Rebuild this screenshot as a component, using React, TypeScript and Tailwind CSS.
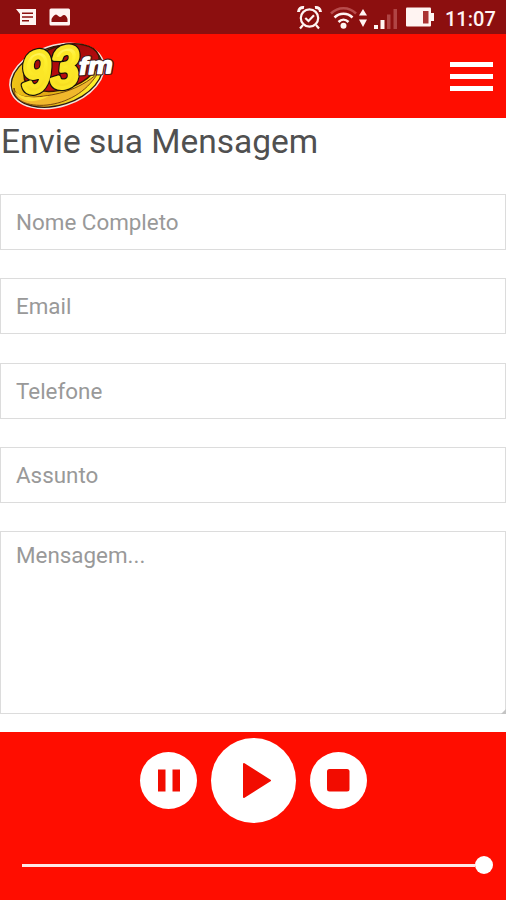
import { useState } from "react";

const FIELDS = [
  { name: "nome", label: "Nome Completo", type: "text" },
  { name: "email", label: "Email", type: "email" },
  { name: "telefone", label: "Telefone", type: "tel" },
  { name: "assunto", label: "Assunto", type: "text" },
];

const INPUT_CLASS =
  "block w-full rounded-none border border-[#dcdcdc] bg-white px-[15px] text-[22.4px] text-[#444] outline-none placeholder:text-[#999]";

function StatusBar() {
  return (
    <div className="flex h-[34px] items-center justify-between bg-[#8c0f0f] pr-[11px] pl-4 text-[#fff4f2]">
      <div className="flex items-center gap-[13px]">
        <svg width="20" height="18" viewBox="0 0 20 18">
          <path d="M0 1h20v16H4V6z" fill="#fff4f2" />
          <path d="M6 5.3h11M6 9h11M6 12.7h7" stroke="#8c0f0f" strokeWidth="1.5" />
        </svg>
        <svg width="22" height="18" viewBox="0 0 22 18">
          <rect x="0.5" y="0.5" width="20.5" height="17" rx="1.5" fill="#fff4f2" />
          <path
            d="M2.5 14v-3c1-2 3-4.500 4.500-4.500s2.500 2.500 4 2.500S13.500 7 15 7s3 2 3.500 4v3z"
            fill="#8c0f0f"
          />
        </svg>
      </div>
      <div className="flex items-center">
        {/* alarm */}
        <svg width="25" height="25" viewBox="0 0 25 25" fill="none" stroke="#fff4f2" strokeWidth="2.2">
          <circle cx="12.5" cy="13" r="8.7" />
          <path d="M8.3 13l3.2 3 5.5-5.8M6 20l-3 3.5M19 20l3 3.5" />
          <path d="M1.5 7c0-3 2.5-5 5.5-4.500M23.5 7c0-3-2.5-5-5.5-4.500" strokeWidth="3" />
        </svg>
        {/* wifi */}
        <svg className="ml-2" width="38" height="25" viewBox="0 0 38 25" fill="none" strokeWidth="2.5">
          <path d="M1 8.500C8 1.500 19 1.500 26 8.500" stroke="#b84c4c" />
          <path d="M4.500 12.500c5-5 13-5 18 0M8.500 17c3-3 7-3 10 0" stroke="#fff4f2" />
          <circle cx="13.5" cy="20.8" r="3" fill="#fff4f2" />
          <path d="M29 10.500l4-6.500 4 6.500zM29 14.500h8L33 22z" fill="#fff4f2" />
        </svg>
        {/* signal */}
        <svg className="mt-1 ml-1.5" width="24" height="24" viewBox="0 0 24 24">
          <path d="M0 18h4v4H0zM6.500 13h4v9h-4z" fill="#fff4f2" />
          <path d="M13 7.500h3.500V22H13zM19.500 2H23v20h-3.500z" fill="#b04444" />
        </svg>
        {/* battery */}
        <svg className="ml-2" width="28" height="20" viewBox="0 0 28 20">
          <rect x="0" y="0.5" width="25" height="19" rx="1" fill="#fff4f2" />
          <rect x="25" y="6" width="3" height="8" fill="#fff4f2" />
          <rect x="17" y="4" width="5.5" height="12.5" fill="#a33" />
        </svg>
        <span className="ml-[11px] w-[50px] pt-[3px] text-[20px] leading-none font-medium whitespace-nowrap">
          11:07
        </span>
      </div>
    </div>
  );
}

function Logo() {
  return (
    <svg width="110" height="74" viewBox="0 0 110 74" className="overflow-visible">
      <defs>
        <linearGradient id="gold" x1="0" y1="0" x2="1" y2="0.4">
          <stop offset="0" stopColor="#f5cf18" />
          <stop offset="0.55" stopColor="#e2a814" />
          <stop offset="1" stopColor="#fff02a" />
        </linearGradient>
        <linearGradient id="disc" x1="0" y1="0" x2="0" y2="1">
          <stop offset="0" stopColor="#9c0a0a" />
          <stop offset="1" stopColor="#c70c10" />
        </linearGradient>
        <linearGradient id="digits" x1="0" y1="0" x2="0" y2="1">
          <stop offset="0" stopColor="#fff9ae" />
          <stop offset="0.35" stopColor="#fff02e" />
          <stop offset="1" stopColor="#f3d51c" />
        </linearGradient>
      </defs>
      <g transform="rotate(-18 48 35)">
        <ellipse cx="48" cy="35" rx="48.5" ry="30.5" fill="#2a1a10" stroke="#f3e4dc" strokeWidth="1.5" />
        <ellipse cx="48" cy="35" rx="46.5" ry="28.5" fill="url(#gold)" />
        <ellipse cx="55" cy="28.5" rx="39" ry="21.5" fill="url(#disc)" stroke="#3a1600" strokeWidth="1.5" />
      </g>
      <path
        d="M5 47c1 8 12 10 22 9 20-2 42-6 62-24-12 20-32 30-51 32C18 66 4 59 5 47z"
        fill="#f0b82c"
        stroke="#5a2a08"
        strokeWidth="0.8"
      />
      <path d="M6 50c7 8 22 7 34 5-14 8-28 7-34-5z" fill="#ffe035" />
      <g
        fontFamily="'Liberation Sans', Arial, sans-serif"
        fontWeight="700"
        fontStyle="italic"
        strokeLinejoin="round"
      >
        <g transform="rotate(-9 42 30) skewX(-5)">
          <text
            x="15"
            y="48"
            fontSize="57"
            textLength="58"
            lengthAdjust="spacingAndGlyphs"
            fill="#16120a"
            stroke="#16120a"
            strokeWidth="6.5"
          >
            93
          </text>
          <text
            x="15"
            y="48"
            fontSize="57"
            textLength="58"
            lengthAdjust="spacingAndGlyphs"
            fill="url(#digits)"
            stroke="#fbe626"
            strokeWidth="4"
          >
            93
          </text>
        </g>
        <text
          x="70"
          y="33"
          fontSize="24"
          textLength="34"
          lengthAdjust="spacingAndGlyphs"
          transform="rotate(-3 86 28)"
          fill="#fff"
          stroke="#4a2020"
          strokeWidth="3.5"
          paintOrder="stroke"
        >
          fm
        </text>
        <text
          x="70"
          y="33"
          fontSize="24"
          textLength="34"
          lengthAdjust="spacingAndGlyphs"
          transform="rotate(-3 86 28)"
          fill="#fff"
          stroke="#fff"
          strokeWidth="1.2"
        >
          fm
        </text>
      </g>
    </svg>
  );
}

function Header() {
  return (
    <header className="flex h-[84px] items-start justify-between bg-[#ff0d00] pr-[13px] pl-[9px]">
      <div className="pt-[7px]">
        <Logo />
      </div>
      <button aria-label="Menu" className="mt-[28px] flex w-[43px] flex-col gap-[7px]">
        <span className="h-[5px] w-full bg-white" />
        <span className="h-[5px] w-full bg-white" />
        <span className="h-[5px] w-full bg-white" />
      </button>
    </header>
  );
}

function Player() {
  const [volume, setVolume] = useState(100);

  return (
    <footer className="h-[168.5px] bg-[#ff0d00] pt-[6.5px]">
      <div className="flex items-center justify-center gap-[14px]">
        <button aria-label="Pausar" className="size-[57px] rounded-full bg-white">
          <svg width="57" height="57" viewBox="0 0 57 57" fill="#f20c00">
            <path d="M18 17.500h7.500v22H18zM32.500 17.500H40v22h-7.500z" />
          </svg>
        </button>
        <button aria-label="Tocar" className="size-[85px] rounded-full bg-white">
          <svg width="85" height="85" viewBox="0 0 85 85" fill="#f20c00">
            <path d="M33 26L59 42.500L33 59z" stroke="#f20c00" strokeWidth="2" strokeLinejoin="round" />
          </svg>
        </button>
        <button aria-label="Parar" className="size-[57px] rounded-full bg-white">
          <svg width="57" height="57" viewBox="0 0 57 57" fill="#f20c00">
            <rect x="17" y="17" width="22.5" height="22.5" rx="2.5" />
          </svg>
        </button>
      </div>
      <div className="mt-[32.5px] flex h-[19px] items-center pr-[13px] pl-[22px]">
        <div className="h-[3px] flex-1 bg-[#ffe9e7]" />
        <button
          aria-label="Volume"
          onClick={() => setVolume(volume === 100 ? 0 : 100)}
          className="size-[18px] rounded-full bg-white"
        />
      </div>
    </footer>
  );
}

export default function App() {
  return (
    <div className="flex h-[900px] w-full flex-col overflow-hidden bg-white font-['Roboto',sans-serif]">
      <StatusBar />
      <Header />
      <main className="flex-1">
        <h1 className="pt-[4px] pl-px text-[33.5px] leading-[40px] whitespace-nowrap text-[#505050]">
          Envie sua Mensagem
        </h1>
        <form className="mt-[32px] flex flex-col gap-[28.3px]">
          {FIELDS.map((field) => (
            <input
              key={field.name}
              name={field.name}
              type={field.type}
              placeholder={field.label}
              className={`${INPUT_CLASS} h-[56px]`}
            />
          ))}
          <div className="relative">
            <textarea
              name="mensagem"
              placeholder="Mensagem..."
              className={`${INPUT_CLASS} h-[182.5px] resize-none pt-[9px] leading-[28px]`}
            />
            {/* resize grip */}
            <svg className="absolute right-0 bottom-0" width="5" height="5" viewBox="0 0 5 5">
              <path d="M5 0v5H0z" fill="#c4c4c4" />
            </svg>
          </div>
        </form>
      </main>
      <Player />
    </div>
  );
}
